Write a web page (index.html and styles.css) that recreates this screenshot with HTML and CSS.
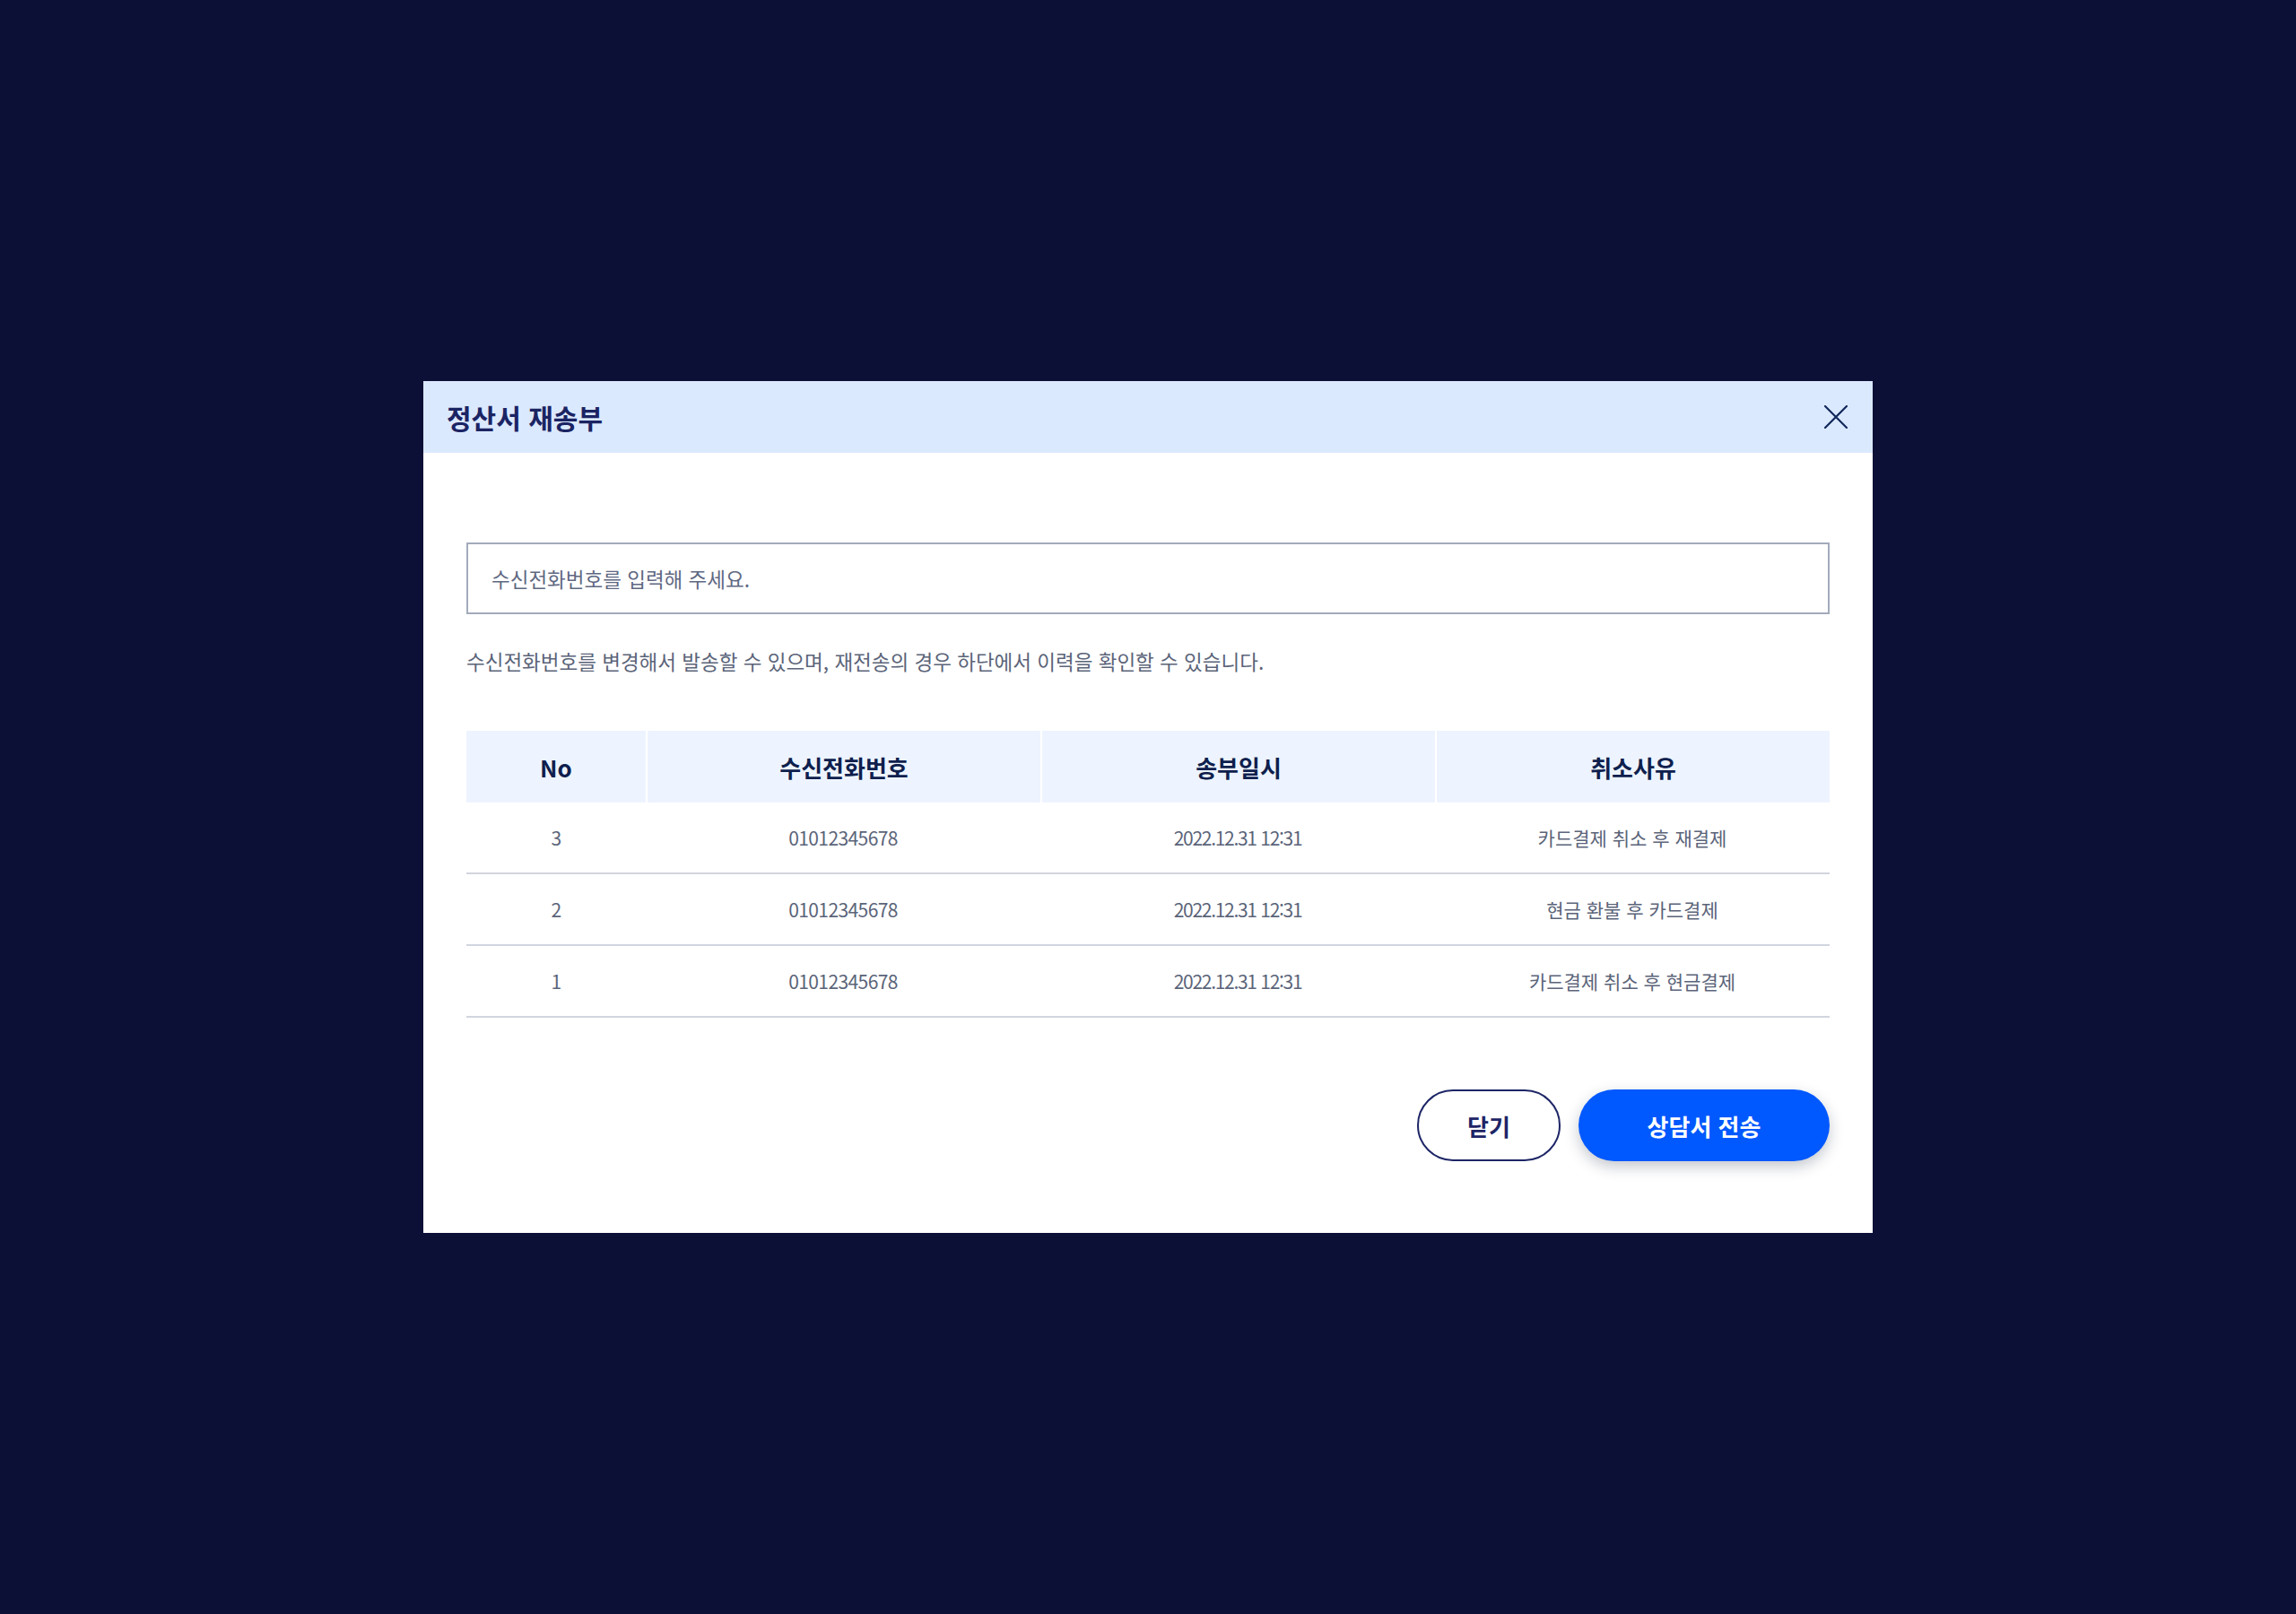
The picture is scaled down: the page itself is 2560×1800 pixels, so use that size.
FILE: index.html
```html
<!DOCTYPE html>
<html lang="ko">
<head>
<meta charset="utf-8">
<title>정산서 재송부</title>
<link rel="stylesheet" href="styles.css">
</head>
<body>
<div class="overlay">
  <section class="modal" role="dialog" aria-labelledby="modal-title">
    <header class="modal-header">
      <h2 class="modal-title" id="modal-title">정산서 재송부</h2>
      <button class="close-btn" type="button" aria-label="닫기">
        <svg width="26" height="26" viewBox="0 0 26 26" aria-hidden="true">
          <path d="M1 1 L25 25 M25 1 L1 25" stroke="#12285a" stroke-width="2.2" stroke-linecap="square" fill="none"/>
        </svg>
      </button>
    </header>
    <div class="modal-body">
      <input class="phone-input" type="text" placeholder="수신전화번호를 입력해 주세요.">
      <p class="help-text">수신전화번호를 변경해서 발송할 수 있으며, 재전송의 경우 하단에서 이력을 확인할 수 있습니다.</p>
      <table class="history">
        <colgroup>
          <col class="col-no">
          <col class="col-wide">
          <col class="col-wide">
          <col class="col-wide">
        </colgroup>
        <thead>
          <tr><th>No</th><th>수신전화번호</th><th>송부일시</th><th>취소사유</th></tr>
        </thead>
        <tbody>
          <tr><td class="num">3</td><td class="num">01012345678</td><td class="date">2022.12.31 12:31</td><td>카드결제 취소 후 재결제</td></tr>
          <tr><td class="num">2</td><td class="num">01012345678</td><td class="date">2022.12.31 12:31</td><td>현금 환불 후 카드결제</td></tr>
          <tr><td class="num">1</td><td class="num">01012345678</td><td class="date">2022.12.31 12:31</td><td>카드결제 취소 후 현금결제</td></tr>
        </tbody>
      </table>
      <div class="actions">
        <button class="btn btn-outline" type="button">닫기</button>
        <button class="btn btn-primary" type="button">상담서 전송</button>
      </div>
    </div>
  </section>
</div>
</body>
</html>
```

FILE: styles.css
```css
* { box-sizing: border-box; }

html, body {
  margin: 0;
  padding: 0;
}

body {
  background: #0c0f36;
  font-family: "Noto Sans CJK KR", "Noto Sans", sans-serif;
  color: #5b6479;
}

.overlay {
  width: 100%;
  min-height: 100vh;
  display: flex;
  align-items: center;
  justify-content: center;
}

.modal {
  width: 1616px;
  background: #ffffff;
  display: flex;
  flex-direction: column;
}

.modal-header {
  height: 80px;
  background: #dbe9ff;
  display: flex;
  align-items: center;
  justify-content: space-between;
  padding: 0 28px 0 26px;
}

.modal-title {
  margin: 0;
  font-size: 30px;
  font-weight: 700;
  color: #1b2463;
  line-height: 1;
}

.close-btn {
  width: 26px;
  height: 26px;
  padding: 0;
  border: 0;
  background: transparent;
  display: flex;
  cursor: pointer;
}

.modal-body {
  padding: 100px 48px 80px;
  display: flex;
  flex-direction: column;
}

.phone-input {
  width: 100%;
  height: 80px;
  border: 2px solid #a3abbb;
  border-radius: 0;
  padding: 0 26px;
  font-family: inherit;
  font-size: 22.5px;
  color: #333a4d;
  outline: none;
  background: #fff;
}

.phone-input::placeholder {
  color: #5f6882;
}

.help-text {
  margin: 36px 0 0;
  font-size: 22.5px;
  line-height: 32px;
  color: #5b6479;
}

.history {
  margin-top: 62px;
  width: 100%;
  table-layout: fixed;
  border-collapse: separate;
  border-spacing: 0;
}

.col-no { width: 200px; }
.col-wide { width: 440px; }

.history th {
  height: 80px;
  padding: 0;
  background: #edf4ff;
  color: #0f1f4d;
  font-size: 26px;
  font-weight: 700;
  text-align: center;
  border-left: 2px solid #ffffff;
}

.history th:first-child {
  border-left: 0;
}

.history td {
  height: 80px;
  padding: 0;
  text-align: center;
  font-size: 21px;
  color: #5b6479;
  border-bottom: 2px solid #d1d5df;
}

.history td.num {
  letter-spacing: -0.6px;
}

.history td.date {
  letter-spacing: -1.3px;
}

.actions {
  margin-top: 80px;
  display: flex;
  justify-content: flex-end;
  gap: 20px;
}

.btn {
  height: 80px;
  border-radius: 40px;
  font-family: inherit;
  font-size: 26px;
  font-weight: 700;
  cursor: pointer;
}

.btn-outline {
  width: 160px;
  background: #ffffff;
  border: 2px solid #1d2566;
  color: #1d2566;
}

.btn-primary {
  width: 280px;
  background: #0058ff;
  border: 0;
  color: #ffffff;
  box-shadow: 0 6px 16px rgba(20, 30, 60, 0.25);
}
```
